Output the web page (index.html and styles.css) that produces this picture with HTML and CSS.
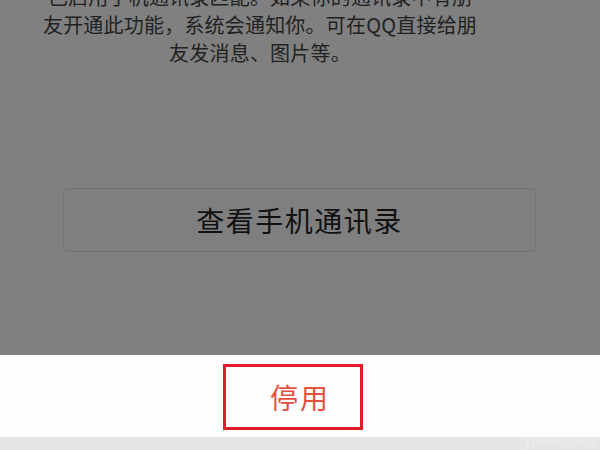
FILE: index.html
```html
<!DOCTYPE html>
<html lang="zh-CN">
<head>
<meta charset="utf-8">
<link rel="stylesheet" href="styles.css">
</head>
<body>
<div class="screen">
  <div class="dim">
    <p class="desc">已启用手机通讯录匹配。如果你的通讯录中有朋<br>友开通此功能，系统会通知你。可在QQ直接给朋<br>友发消息、图片等。</p>
    <div class="btn-row">
      <div class="view-btn">查看手机通讯录</div>
    </div>
  </div>
  <div class="sheet">
    <div class="stop-btn">停用</div>
  </div>
  <div class="bar"><span class="mark">jdbx.net</span></div>
</div>
</body>
</html>
```
FILE: styles.css
```css
html, body {
  margin: 0;
  padding: 0;
}
body {
  width: 600px;
  height: 450px;
  overflow: hidden;
  font-family: "Noto Sans CJK SC", "Noto Sans", sans-serif;
}
.screen {
  display: flex;
  flex-direction: column;
  width: 600px;
  height: 450px;
}
.dim {
  flex: 0 0 355px;
  height: 355px;
  background: #808080;
  display: flex;
  flex-direction: column;
  overflow: hidden;
}
.desc {
  margin: -17px 0 0 0;
  padding: 0 80px 0 0;
  text-align: center;
  font-size: 20px;
  line-height: 28px;
  letter-spacing: 0.2px;
  color: #222;
  white-space: nowrap;
}
.btn-row {
  margin-top: 121px;
  padding: 0 64px 0 63px;
}
.view-btn {
  height: 62px;
  border: 1px solid #747474;
  border-radius: 3px;
  background: #7f7f7f;
  display: flex;
  align-items: center;
  justify-content: center;
  font-size: 28px;
  letter-spacing: 1.5px;
  color: #111;
}
.sheet {
  flex: 0 0 82px;
  height: 82px;
  background: #fdfdfd;
  display: flex;
  justify-content: center;
  align-items: flex-start;
  padding-right: 14px;
}
.stop-btn {
  box-sizing: border-box;
  margin-top: 9px;
  width: 140px;
  height: 66px;
  padding-left: 14px;
  border: 3px solid #e21b2b;
  display: flex;
  align-items: center;
  justify-content: center;
  font-size: 28px;
  letter-spacing: 2px;
  color: #e4503d;
}
.bar {
  flex: 0 0 13px;
  height: 13px;
  overflow: hidden;
  background: #e6e6e6;
  display: flex;
  justify-content: flex-end;
  align-items: flex-start;
}
.mark {
  font-family: "Liberation Sans", sans-serif;
  font-size: 20px;
  line-height: 20px;
  color: #ececec;
  margin: -9px 4px 0 0;
}
```
